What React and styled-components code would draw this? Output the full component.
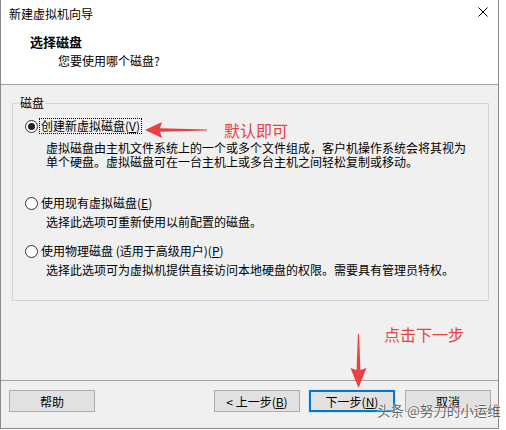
import React from "react";
import styled, { createGlobalStyle } from "styled-components";

const GlobalStyle = createGlobalStyle`
  body {
    margin: 0;
    background: #ffffff;
    font-family: "Noto Sans CJK SC", "Microsoft YaHei", sans-serif;
    font-size: 12px;
    color: #000;
  }
`;

const RED = "#e8413f";

const options = [
  {
    id: "new",
    label: "创建新虚拟磁盘",
    key: "V",
    checked: true,
    focus: true,
    descGap: 7,
    rowGap: 0,
    desc: [
      "虚拟磁盘由主机文件系统上的一个或多个文件组成，客户机操作系统会将其视为",
      "单个硬盘。虚拟磁盘可在一台主机上或多台主机之间轻松复制或移动。",
    ],
  },
  {
    id: "existing",
    label: "使用现有虚拟磁盘",
    key: "E",
    descGap: 4,
    rowGap: 26,
    desc: ["选择此选项可重新使用以前配置的磁盘。"],
  },
  {
    id: "physical",
    label: "使用物理磁盘 (适用于高级用户)",
    key: "P",
    descGap: 4,
    rowGap: 14,
    desc: ["选择此选项可为虚拟机提供直接访问本地硬盘的权限。需要具有管理员特权。"],
  },
];

const App = () => {
  return (
    <>
      <GlobalStyle />
      <Window>
        <TitleBar>
          <span>新建虚拟机向导</span>
          <Close viewBox="0 0 10 10">
            <path d="M0.5 0.5 L9.5 9.5 M9.5 0.5 L0.5 9.5" />
          </Close>
        </TitleBar>
        <Header>
          <HeaderTitle>选择磁盘</HeaderTitle>
          <HeaderSub>您要使用哪个磁盘?</HeaderSub>
        </Header>
        <Body>
          <Group>
            <legend>磁盘</legend>
            {options.map((opt) => (
              <Option key={opt.id} $gap={opt.rowGap}>
                <Row>
                  <Radio $checked={opt.checked} />
                  <Label $focus={opt.focus}>
                    {opt.label}(<u>{opt.key}</u>)
                  </Label>
                </Row>
                <Desc $gap={opt.descGap}>
                  {opt.desc.map((line) => (
                    <div key={line}>{line}</div>
                  ))}
                </Desc>
              </Option>
            ))}
          </Group>
        </Body>
        <Footer>
          <Button>帮助</Button>
          <Spacer />
          <Button>
            &lt; 上一步(<u>B</u>)
          </Button>
          <Button $primary>
            下一步(<u>N</u>)
          </Button>
          <Button>取消</Button>
        </Footer>

        <Note $top={122} $left={223}>默认即可</Note>
        <Arrow $top={121} $left={144} width="62" height="18" viewBox="0 0 62 18">
          <polygon points="0,9 17,1 15,7.2 62,8.4 62,9.6 15,10.8 17,17" />
        </Arrow>
        <Note $top={326} $left={383}>点击下一步</Note>
        <Arrow $top={334} $left={349} width="17" height="54" viewBox="0 0 17 54">
          <polygon points="7.9,0 9.1,0 10.4,36 16.5,34 8.5,54 0.5,34 6.6,36" />
        </Arrow>
        <Watermark>头条 @努力的小运维</Watermark>
      </Window>
    </>
  );
};

const Window = styled.div`
  position: relative;
  box-sizing: border-box;
  width: 499px;
  height: 429px;
  border: 1px solid #8a8a8a;
  border-top: none;
  display: flex;
  flex-direction: column;
  background: #f0f0f0;
`;

const TitleBar = styled.div`
  height: 27px;
  display: flex;
  align-items: center;
  justify-content: space-between;
  padding: 0 10px 0 8px;
  background: #fff;
  line-height: 16px;
`;

const Close = styled.svg`
  width: 10px;
  height: 10px;
  margin-bottom: 3px;
  path {
    stroke: #000;
    stroke-width: 1;
    fill: none;
  }
`;

const Header = styled.div`
  height: 57px;
  box-sizing: content-box;
  background: #fff;
  border-bottom: 1px solid #a0a0a0;
  padding-left: 29px;
`;

const HeaderTitle = styled.div`
  margin-top: 6px;
  font-size: 13px;
  font-weight: 700;
  line-height: 18px;
`;

const HeaderSub = styled.div`
  margin: 2px 0 0 28px;
  line-height: 16px;
`;

const Body = styled.div`
  flex: 1;
`;

const Group = styled.fieldset`
  margin: 10px 9px 0 11px;
  padding: 7px 12px 23px 12px;
  border: 1px solid #d5d5d5;
  min-width: 0;
  legend {
    margin-left: -6px;
    padding: 0 1px;
    line-height: 16px;
  }
`;

const Option = styled.div`
  margin-top: ${(p) => p.$gap}px;
`;

const Row = styled.div`
  display: flex;
  align-items: center;
  height: 16px;
`;

const Radio = styled.span`
  position: relative;
  box-sizing: border-box;
  width: 13px;
  height: 13px;
  border-radius: 50%;
  border: 1px solid #333;
  background: #fff;
  flex-shrink: 0;
  &::after {
    content: "";
    display: ${(p) => (p.$checked ? "block" : "none")};
    position: absolute;
    left: 2px;
    top: 2px;
    width: 7px;
    height: 7px;
    border-radius: 50%;
    background: #222;
  }
`;

const Label = styled.span`
  margin-left: ${(p) => (p.$focus ? "1px" : "3px")};
  padding: 0 ${(p) => (p.$focus ? "1px" : "0")};
  border: ${(p) => (p.$focus ? "1px dotted #000" : "none")};
  line-height: ${(p) => (p.$focus ? "14px" : "16px")};
  white-space: nowrap;
`;

const Desc = styled.div`
  margin: ${(p) => p.$gap}px 0 0 21px;
  line-height: 14px;
  white-space: nowrap;
`;

const Footer = styled.div`
  height: 38px;
  border-top: 1px solid #a0a0a0;
  display: flex;
  align-items: flex-start;
  gap: 9px;
  padding: 9px 7px 0 8px;
`;

const Spacer = styled.div`
  flex: 1;
`;

const Button = styled.button`
  box-sizing: border-box;
  width: 86px;
  height: 22px;
  padding: 0;
  font-family: inherit;
  font-size: 12px;
  color: #000;
  background: #e1e1e1;
  border: 1px solid ${(p) => (p.$primary ? "#0078d7" : "#adadad")};
  box-shadow: ${(p) => (p.$primary ? "inset 0 0 0 1px #0078d7, 0 0 0 1px #cfe6f8" : "none")};
  &:last-child {
    margin-left: 1px;
  }
`;

const Note = styled.div`
  position: absolute;
  top: ${(p) => p.$top}px;
  left: ${(p) => p.$left}px;
  color: ${RED};
  font-size: 16px;
  line-height: 17px;
  white-space: nowrap;
`;

const Arrow = styled.svg`
  position: absolute;
  top: ${(p) => p.$top}px;
  left: ${(p) => p.$left}px;
  fill: ${RED};
`;

const Watermark = styled.div`
  position: absolute;
  left: 376px;
  top: 400px;
  font-size: 13.5px;
  line-height: 20px;
  color: rgba(70, 70, 70, 0.85);
  text-shadow: 0 0 1px #fff, 0 0 2px #fff;
  white-space: nowrap;
`;

export default App;
